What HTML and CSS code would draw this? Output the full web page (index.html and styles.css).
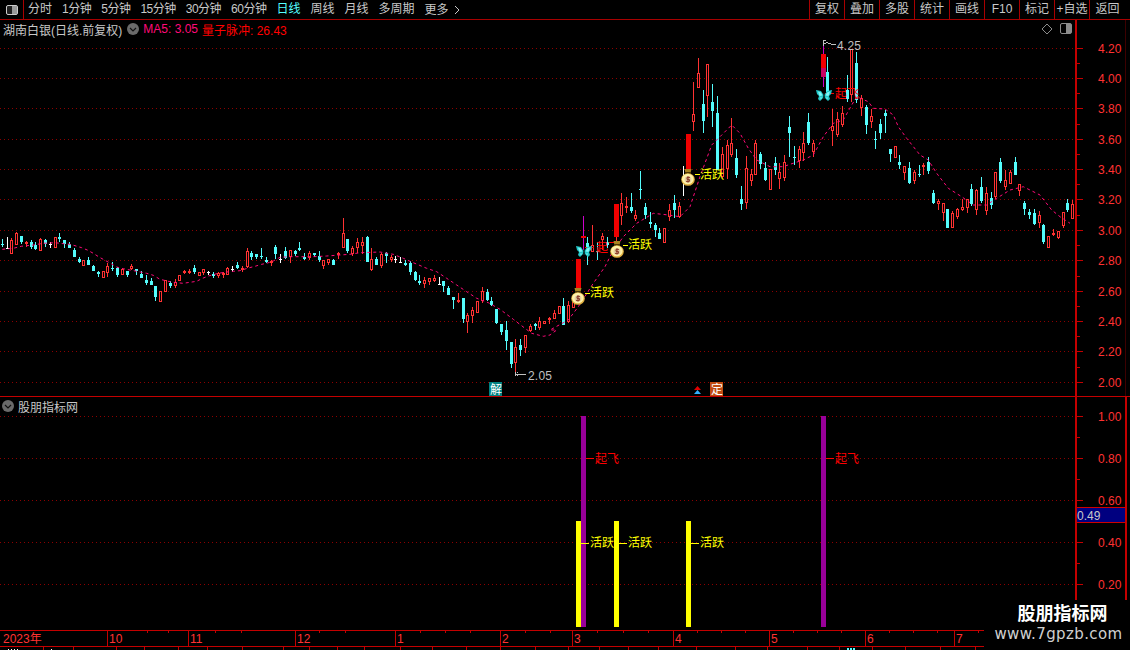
FILE: index.html
```html
<!DOCTYPE html>
<html lang="zh">
<head>
<meta charset="utf-8">
<title>股朋指标网</title>
<link rel="stylesheet" href="styles.css">
</head>
<body>
<div class="app">
  <header class="topbar">
    <div class="layout-btn"><svg class="ico" viewBox="0 0 12 10"><rect x=".5" y=".5" width="11" height="9" rx="1.5" class="ico-frame"/><rect x="6" y="1" width="5" height="8" class="ico-fill"/></svg></div>
    <nav class="periods">
      <span>分时</span><span class="num">1分钟</span><span class="num">5分钟</span><span class="num">15分钟</span><span class="num">30分钟</span><span class="num">60分钟</span><span class="active">日线</span><span>周线</span><span>月线</span><span>多周期</span><span class="more">更多<svg class="more-arrow" viewBox="0 0 6 10"><path d="M1 1l4 4-4 4"/></svg></span>
    </nav>
    <nav class="tools">
      <span>复权</span><span>叠加</span><span>多股</span><span>统计</span><span>画线</span><span>F10</span><span>标记</span><span>+自选</span><span>返回</span>
    </nav>
  </header>

  <section class="pane pane-main">
    <svg class="chart" viewBox="0 20 1130 377" width="1130" height="377">
      <defs>
        <symbol id="bag" viewBox="0 0 14 17">
          <path d="M3.500 0h7l-1 4h-5z" fill="#a88420"/>
          <rect x="4" y="3" width="6" height="2" fill="#4a3606"/>
          <ellipse cx="7" cy="10.500" rx="6.800" ry="6.300" fill="#e0b040"/>
          <ellipse cx="6.800" cy="10" rx="5.800" ry="5.300" fill="#fff2a8"/>
          <ellipse cx="7" cy="10.500" rx="3.400" ry="3.300" fill="#e4cfa0"/>
          <path d="M9 8.400H6v2h2.400v2H5M7 7.200v6.400" fill="none" stroke="#8a3a28" stroke-width="1"/>
        </symbol>
        <symbol id="fly" viewBox="0 0 16 12">
          <path d="M7.500 5L5 1 0 0l1 4 2 2-1 3 2 2 3-3z" fill="#22c8c8"/>
          <path d="M8.500 5L11 1l5-1-1 4-2 2 1 3-2 2-3-3z" fill="#22c8c8"/>
          <path d="M2 1.500l3 1 1.500 3-3 .5zM14 1.500l-3 1-1.500 3 3 .5zM4 7.500l2 0-1 2zM12 7.500l-2 0 1 2z" fill="#80f6f6"/>
          <path d="M8 3.500v5.500" stroke="#0a4a4a" stroke-width="1"/>
        </symbol>
      </defs>
      <g id="main-grid"></g>
      <g id="candles"></g>
      <path id="ma" class="ma" d=""/>
      <rect class="big-red" x="576" y="259" width="5" height="30"/>
      <rect class="big-red" x="614" y="204" width="5" height="33"/>
      <rect class="big-wick" x="616" y="237" width="1" height="4"/>
      <rect class="big-red" x="686" y="134" width="5" height="36"/>
      <rect class="white-wick" x="683" y="166" width="1" height="30"/>
      <rect class="mag-wick" x="583" y="216" width="1" height="34"/>
      <rect class="big-red" x="581" y="236" width="5" height="2"/>
      <rect class="mag-wick" x="823" y="43" width="1" height="44"/>
      <rect class="big-red" x="821" y="54" width="5" height="14"/>
      <rect class="deep-red" x="821" y="68" width="5" height="9"/>

      <path class="dash-red" d="M585 247h9M825 93h9"/>
      <text class="t-red t-cn" x="596" y="252">起飞</text>
      <text class="t-red t-cn" x="835" y="98">起飞</text>

      <use href="#bag" x="571" y="288" width="14" height="17"/>
      <use href="#bag" x="610" y="241" width="14" height="17"/>
      <use href="#bag" x="681" y="169" width="14" height="17"/>
      <use href="#fly" x="576" y="246" width="16" height="12"/>
      <use href="#fly" x="816" y="90" width="16" height="12"/>

      <path class="dash-yel" d="M585 293h5M623 245h5M695 174h5"/>
      <text class="t-yel t-cn" x="590" y="297">活跃</text>
      <text class="t-yel t-cn" x="628" y="249">活跃</text>
      <text class="t-yel t-cn" x="700" y="179">活跃</text>

      <path class="note-line" d="M515 372v4M516 374h10M517 372v1M517 375v1"/>
      <text class="t-note" x="528" y="380">2.05</text>
      <path class="note-line" d="M823 46v-6h3M824 43h2M826 42h2M828 43h3M831 44h5"/>
      <text class="t-note" x="837" y="50">4.25</text>

      <rect class="box-teal" x="489" y="382" width="13" height="14"/>
      <text class="t-box" x="490" y="394">解</text>
      <path class="tri-red" d="M697.500 386l3.500 4h-7z"/>
      <path class="tri-blue" d="M697.500 390l3.500 4h-7z"/>
      <rect class="box-orange" x="710" y="382" width="13" height="14"/>
      <text class="t-box" x="711" y="394">定</text>

      <g class="axis-labels">
        <text x="1098" y="53">4.20</text><text x="1098" y="83">4.00</text><text x="1098" y="113">3.80</text><text x="1098" y="144">3.60</text>
        <text x="1098" y="174">3.40</text><text x="1098" y="204">3.20</text><text x="1098" y="235">3.00</text><text x="1098" y="265">2.80</text>
        <text x="1098" y="296">2.60</text><text x="1098" y="326">2.40</text><text x="1098" y="356">2.20</text><text x="1098" y="387">2.00</text>
      </g>
    </svg>
    <div class="legend">
      <span class="legend-name">湖南白银(日线.前复权)</span>
      <svg class="chev" viewBox="0 0 12 12"><circle cx="6" cy="6" r="6" class="chev-bg"/><path d="M3 5l3 3 3-3" class="chev-line"/></svg>
      <span class="legend-ma">MA5: 3.05</span>
      <span class="legend-pulse">量子脉冲: 26.43</span>
      <svg class="corner" viewBox="0 0 32 12"><path d="M6 1l5 5-5 5-5-5z" class="corner-line"/><rect x="19.500" y=".5" width="11" height="10" rx="1.500" class="corner-line"/><rect x="25" y="1" width="5" height="9" class="corner-fill"/></svg>
    </div>
  </section>

  <section class="pane pane-sub">
    <svg class="chart" viewBox="0 397 1130 233" width="1130" height="233">
      <g id="sub-grid"></g>
      <rect class="bar-yel" x="576" y="521" width="5" height="106"/>
      <rect class="bar-pur" x="581" y="416" width="5" height="211"/>
      <rect class="bar-yel" x="614" y="521" width="5" height="106"/>
      <rect class="bar-yel" x="686" y="521" width="5" height="106"/>
      <rect class="bar-pur" x="821" y="416" width="5" height="211"/>
      <path class="dash-red" d="M586 458h8M826 458h8"/>
      <text class="t-red t-cn" x="595" y="463">起飞</text>
      <text class="t-red t-cn" x="835" y="463">起飞</text>
      <path class="dash-yel" d="M581 543h8M619 543h8M691 543h8"/>
      <text class="t-yel t-cn" x="590" y="547">活跃</text>
      <text class="t-yel t-cn" x="628" y="547">活跃</text>
      <text class="t-yel t-cn" x="700" y="547">活跃</text>
      <rect class="val-box" x="1077" y="507" width="48" height="16"/>
      <path class="val-edge" d="M1077 507.500h48M1077 522.500h48"/>
      <text class="t-val" x="1077" y="520">0.49</text>
      <g class="axis-labels">
        <text x="1098" y="421">1.00</text><text x="1098" y="463">0.80</text><text x="1098" y="505">0.60</text><text x="1098" y="547">0.40</text><text x="1098" y="589">0.20</text>
      </g>
    </svg>
    <div class="legend">
      <svg class="chev chev-left" viewBox="0 0 12 12"><circle cx="6" cy="6" r="6" class="chev-bg"/><path d="M3 5l3 3 3-3" class="chev-line"/></svg>
      <span class="legend-name">股朋指标网</span>
    </div>
  </section>

  <footer class="timeline">
    <svg class="chart" viewBox="0 630 1130 20" width="1130" height="20">
      <g id="time-grid"></g>
      <g class="axis-labels">
        <text x="3" y="643">2023年</text><text x="109" y="643">10</text><text x="190" y="643">11</text><text x="297" y="643">12</text><text x="397" y="643">1</text><text x="502" y="643">2</text>
        <text x="574" y="643">3</text><text x="675" y="643">4</text><text x="771" y="643">5</text><text x="867" y="643">6</text><text x="956" y="643">7</text>
      </g>
    </svg>
  </footer>

  <aside class="watermark">
    <strong class="wm-title">股朋指标网</strong>
    <span class="wm-url">www.7gpzb.com</span>
  </aside>
</div>
<script src="chart.js"></script>
</body>
</html>
```

FILE: styles.css
```css
* { box-sizing: border-box; }
html, body { margin: 0; padding: 0; background: #000; }
body {
  font-family: "Liberation Sans", "Noto Sans CJK SC", sans-serif;
  font-size: 12px;
  color: #c8c8c8;
}
.app {
  position: relative;
  width: 1130px;
  height: 650px;
  overflow: hidden;
  display: flex;
  flex-direction: column;
  background: #000;
}

/* top bar */
.topbar {
  flex: 0 0 20px;
  display: flex;
  align-items: stretch;
  border-bottom: 1px solid #a80000;
  line-height: 18px;
}
.layout-btn {
  width: 24px;
  display: flex;
  align-items: center;
  justify-content: center;
  border-right: 1px solid #a80000;
}
.ico { width: 12px; height: 10px; }
.ico-frame { fill: #222; stroke: #ccc; stroke-width: 1; }
.ico-fill { fill: #999; }
.periods {
  display: flex;
  gap: 10px;
  padding-left: 4px;
  white-space: nowrap;
}
.periods .num { letter-spacing: -.5px; }
.periods .active { color: #54ffff; }
.more { display: flex; align-items: center; gap: 5px; }
.more-arrow { width: 6px; height: 10px; }
.more-arrow path { fill: none; stroke: #c8c8c8; stroke-width: 1; }
.tools {
  margin-left: auto;
  display: flex;
  padding-right: 5px;
}
.tools span {
  width: 35px;
  text-align: center;
  border-left: 1px solid #a80000;
  white-space: nowrap;
}
.tools span:last-child { width: 36px; }

/* panes */
.pane { position: relative; }
.pane-main { flex: 0 0 377px; }
.pane-sub { flex: 0 0 233px; }
.timeline { position: relative; flex: 0 0 20px; }
.chart { position: absolute; left: 0; top: 0; display: block; }

.legend {
  position: absolute;
  left: 3px;
  right: 58px;
  top: 2px;
  display: flex;
  align-items: center;
  height: 14px;
  white-space: nowrap;
}
.pane-sub .legend { left: 2px; top: 2px; }
.legend-name { color: #c8c8c8; }
.chev { width: 12px; height: 12px; margin-left: 5px; }
.chev-left { margin-left: 0; margin-right: 4px; }
.chev-bg { fill: #6a6a6a; }
.chev-line { fill: none; stroke: #111; stroke-width: 1.2; }
.legend-ma { color: #ff0a78; margin-left: 4px; }
.legend-pulse { color: #ff0000; margin-left: 4px; }
.corner { width: 32px; height: 12px; margin-left: auto; margin-right: -1px; }
.corner-line { fill: none; stroke: #8c8c8c; stroke-width: 1; }
.corner-fill { fill: #8c8c8c; }

/* chart drawing */
.chart text { font-family: "Liberation Sans", "Noto Sans CJK SC", sans-serif; font-size: 12px; }
.chart rect, .chart line { shape-rendering: crispEdges; }
.grid { stroke: #8c0000; stroke-width: 1; stroke-dasharray: 1 3; shape-rendering: crispEdges; }
.axis-line { stroke: #c40000; stroke-width: 1; shape-rendering: crispEdges; }
.axis-wide { stroke: #c40000; stroke-width: 2; shape-rendering: crispEdges; }
.axis-dim { stroke: #3c0000; stroke-width: 1; shape-rendering: crispEdges; }
.axis-labels text { fill: #ff3232; }

.c-red { fill: #ff3232; }
.c-cyan { fill: #54fcfc; }
.c-white { fill: #ffffff; }
.c-hollow { fill: #000; stroke: #ff3232; stroke-width: 1; }
.ma { fill: none; stroke: #ff0a78; stroke-width: 1; stroke-dasharray: 3 3; }

.big-red { fill: #f00000; }
.big-wick { fill: #ff3232; }
.deep-red { fill: #c80060; }
.white-wick { fill: #fff; }
.mag-wick { fill: #cc00cc; }
.dash-red { stroke: #ff0000; fill: none; shape-rendering: crispEdges; }
.dash-yel { stroke: #ffff00; fill: none; shape-rendering: crispEdges; }
.t-red { fill: #ff0000; }
.t-yel { fill: #ffff00; }
.note-line { stroke: #c0c0c0; fill: none; shape-rendering: crispEdges; }
.t-note { fill: #c0c0c0; letter-spacing: .2px; }
.box-teal { fill: #008080; }
.box-orange { fill: #c04a10; }
.t-box { fill: #fff; }
.tri-red { fill: #e00000; }
.tri-blue { fill: #30b0ff; }
.bar-yel { fill: #ffff00; }
.bar-pur { fill: #990099; }
.val-box { fill: #000080; }
.val-edge { stroke: #d00000; fill: none; shape-rendering: crispEdges; }
.t-val { fill: #c8c8c8; }

/* watermark */
.watermark {
  position: absolute;
  right: 0;
  bottom: 0;
  width: 146px;
  height: 50px;
  background: #000;
  display: flex;
  flex-direction: column;
  align-items: center;
  padding-top: 1px;
}
.wm-title {
  font-family: "Noto Sans CJK SC", sans-serif;
  font-size: 18px;
  line-height: 22px;
  color: #fff;
  font-weight: 700;
  padding-left: 11px;
}
.wm-url {
  font-family: "DejaVu Sans", sans-serif;
  font-size: 15px;
  line-height: 18px;
  color: #d0d0d0;
  letter-spacing: .4px;
  margin-left: 3px;
  margin-top: 2px;
}
```

FILE: chart.js
```js
// [x, type, high, low, bodyTop, bodyBottom] in 3x sample units; type: r hollow red, c filled cyan, w white doji
var groups = [
  { ox: 0, oy: 200, rows: [
    [7,'c',118,140,131,134],[21,'w',111,147,144,146],[34,'r',115,162,121,162],[49,'r',96,136,99,134],[64,'c',108,132,108,126],
    [79,'r',123,141,126,133],[94,'c',121,148,126,142],[106,'c',127,150,135,146],[121,'r',115,153,117,152],[136,'c',117,141,120,133],
    [151,'w',126,144,133,135],[166,'r',111,143,112,143],[178,'c',99,127,112,118],[193,'c',120,144,120,132],[208,'c',126,144,133,144],
    [223,'c',144,171,150,171],[238,'c',171,189,177,186],[250,'r',180,197,180,197],[265,'c',171,195,180,195],[280,'c',195,213,198,213],
    [295,'c',213,232,216,222],[310,'r',213,234,214,233],[322,'r',189,232,198,219],[337,'c',186,213,204,207],[352,'c',201,231,204,225],
    [367,'r',204,225,207,224],[382,'c',213,231,213,225],[394,'r',192,210,198,207],[409,'c',207,225,207,213],[424,'c',213,234,222,234],
    [439,'c',225,256,240,250],[454,'c',234,255,243,255],[466,'c',258,303,258,291],[481,'r',273,306,274,305],[496,'r',240,276,241,275],
    [511,'c',243,264,249,258],[526,'r',237,264,246,258],[538,'r',225,243,226,242],[553,'r',210,222,213,219],[568,'r',207,222,213,219],
    [583,'c',195,222,204,216],[598,'r',216,228,217,228],[610,'r',207,225,208,219],[625,'w',213,226,217,219],[640,'c',216,234,222,228],
    [655,'r',216,234,219,228],[670,'r',216,234,219,222],[682,'r',201,225,204,224],[697,'w',198,216,208,210],[712,'c',186,207,195,204],
    [727,'r',198,216,204,210],[742,'r',144,204,153,201],[754,'c',153,180,159,171],[769,'c',162,177,163,171],[784,'c',144,177,168,171],
    [799,'c',171,189,180,186],[814,'r',180,198,183,189],[826,'c',135,177,141,162]
  ]},
  { ox: 280, oy: 220, rows: [
    [0,'w',103,128,117,119],[16,'c',82,118,93,114],[31,'r',90,128,91,112],[46,'c',90,108,94,103],[58,'c',66,93,84,90],
    [73,'c',100,120,111,117],[88,'r',94,120,100,114],[103,'c',99,111,100,104],[118,'c',93,125,108,120],[130,'r',120,147,121,137],
    [145,'r',117,135,118,130],[160,'c',117,135,120,135],[175,'r',96,117,99,105],[190,'r',-6,85,39,84],[202,'c',57,99,57,93],
    [217,'r',78,108,84,102],[232,'r',54,99,66,84],[247,'r',51,102,66,78],[262,'c',48,126,51,126],[274,'r',84,153,117,150],
    [289,'c',111,135,117,135],[304,'r',99,144,102,138],[319,'c',96,129,99,108],[334,'r',105,126,111,120],[346,'w',108,129,117,119],
    [361,'w',111,129,126,128],[376,'c',120,138,129,135],[391,'c',123,165,129,156],[406,'c',153,183,156,180],[418,'c',165,195,183,189],
    [433,'r',171,204,180,192],[448,'r',174,195,175,187],[463,'r',165,186,174,183],[478,'w',171,195,192,194],[490,'c',183,216,183,198],
    [505,'c',198,225,204,225],[520,'c',231,267,231,240],[535,'r',219,249,240,246],[550,'c',234,309,234,297],[562,'r',279,339,285,306],
    [577,'r',261,309,270,288],[592,'r',243,279,244,278],[607,'r',201,249,213,243],[622,'c',207,243,216,240],[634,'c',231,258,243,255],
    [649,'c',267,312,267,309],[664,'c',312,345,312,336],[679,'c',303,390,330,363],[694,'c',366,444,366,432],[706,'r',357,468,381,429],
    [721,'c',357,408,375,390],[736,'r',345,399,346,384],[751,'r',312,336,318,333],[766,'c',309,330,312,318],[778,'r',291,330,303,324],
    [793,'r',303,312,303,312],[808,'r',291,312,294,300],[823,'r',270,297,279,297],[838,'r',258,282,259,282]
  ]},
  { ox: 540, oy: 50, rows: [
    [70,'c',744,825,768,825],[85,'r',753,820,765,815],[100,'r',750,775,757,773],
    [142,'c',560,645,580,596],[157,'r',525,605,585,605],[172,'c',575,630,604,607],[187,'r',550,600,558,570],[202,'c',560,595,575,585],
    [244,'r',430,525,460,497],[259,'r',442,490,468,473],[274,'c',430,490,472,482],[286,'r',480,512,496,506],[301,'c',363,447,417,419],
    [316,'c',460,508,472,496],[331,'c',487,535,516,522],[346,'c',520,562,526,540],[358,'c',535,568,550,568],[373,'r',534,578,535,578],
    [388,'r',462,512,481,500],[403,'c',435,505,460,480],[418,'r',457,505,468,500],[460,'r',97,243,193,215],[475,'r',25,115,70,114],
    [490,'c',120,248,162,213],[502,'r',42,200,43,137],[517,'c',102,230,156,183],[532,'c',138,360,189,360],[547,'r',292,385,313,382],
    [562,'r',270,388,285,358],[574,'r',205,320,280,315],[589,'c',297,384,324,374],[604,'c',408,480,447,461],[619,'r',318,477,355,460],
    [634,'r',357,408,373,392],[646,'r',270,376,280,374],[661,'c',306,357,312,342],[676,'c',336,392,354,390],[691,'r',357,420,358,419],
    [706,'c',321,375,340,360],[718,'r',339,417,366,386],[733,'r',315,393,336,384],[748,'c',198,320,232,250]
  ]},
  { ox: 790, oy: 40, rows: [
    [13,'c',318,375,351,353],[28,'r',318,384,327,362],[40,'r',276,362,309,339],[55,'c',220,315,246,309],[70,'r',300,352,309,336],
    [112,'c',50,155,96,155],[127,'r',207,317,258,272],[142,'r',217,290,238,285],[157,'r',198,260,220,254],[172,'c',105,185,150,178],
    [184,'r',28,185,28,165],[199,'c',37,190,70,180],[214,'r',165,228,175,205],[229,'c',195,282,202,254],[244,'r',208,265,229,245],
    [256,'c',274,327,297,299],[271,'c',237,297,252,278],[286,'c',210,278,219,228],[301,'c',327,365,327,342],[316,'r',318,354,319,353],
    [328,'c',345,387,366,375],[343,'r',378,420,379,399],[358,'c',366,432,384,429],[373,'r',390,432,396,423],[388,'c',375,411,403,406],
    [400,'r',369,405,375,381],[415,'c',351,402,366,393],[430,'c',450,492,459,489],[445,'r',477,510,483,492],[460,'r',489,543,490,519],
    [472,'c',507,564,507,564],[487,'r',514,564,518,563],[502,'r',505,537,507,531],[517,'r',477,514,501,510],[532,'r',477,519,478,504],
    [544,'c',432,498,447,492],[559,'r',447,526,450,510],[574,'c',411,489,441,483],[589,'r',441,525,459,513],[604,'c',456,507,474,495],
    [616,'r',396,478,397,472],[631,'c',354,429,366,423],[646,'r',390,450,420,440],[661,'r',390,432,396,431],[676,'c',351,405,366,405],
    [688,'r',432,468,433,453],[703,'c',483,525,489,507],[718,'c',507,537,516,525],[733,'c',507,555,519,552],[748,'r',513,564,525,549],
    [760,'c',552,612,555,606],[775,'r',588,624,589,623],[790,'r',567,588,579,585],[805,'r',573,597,574,594],[820,'r',516,564,517,557],
    [832,'c',477,516,489,510],[847,'r',480,537,492,537]
  ]}
];

var maSamples = [
  { ox: 0, oy: 200, pts: [[7,148],[40,145],[64,139],[100,135],[130,130],[165,128],[190,131],[210,133],[225,137],[245,143],[262,150],[280,160],[297,171],[315,181],[335,192],[350,201],[370,206],[395,211],[425,217],[440,220],[460,226],[480,238],[510,245],[530,248],[550,250],[570,247],[590,244],[605,236],[625,228],[640,224],[655,220],[680,216],[700,214],[720,212],[745,204],[765,199],[785,193],[800,190],[820,183]] },
  { ox: 280, oy: 220, pts: [[0,112],[30,110],[60,110],[100,110],[140,108],[180,105],[210,103],[240,98],[300,96],[340,103],[370,115],[400,128],[440,145],[470,155],[500,175],[530,195],[560,215],[590,235],[625,248],[660,268],[700,298],[735,325],[755,340],[790,349],[810,345],[830,330]] },
  { ox: 540, oy: 50, pts: [[30,840],[85,810],[115,770],[160,700],[195,650],[215,610],[250,560],[290,520],[340,490],[385,495],[420,500],[450,470],[480,380],[515,285],[540,260],[575,225],[600,250],[625,295],[650,330],[690,350],[730,350]] },
  { ox: 790, oy: 40, pts: [[0,373],[40,360],[70,345],[100,290],[130,250],[160,240],[185,195],[200,170],[235,185],[250,205],[285,207],[310,225],[325,260],[350,295],[390,345],[415,360],[440,400],[475,445],[515,470],[550,495],[590,495],[620,475],[660,450],[700,440],[750,465],[785,510],[810,530],[840,550]] }
];

var NS = 'http://www.w3.org/2000/svg';
function el(parent, name, attrs) {
  var n = document.createElementNS(NS, name);
  for (var k in attrs) n.setAttribute(k, attrs[k]);
  parent.appendChild(n);
  return n;
}
function rect(p, x, y, w, h, cls) { return el(p, 'rect', { x: x, y: y, width: w, height: h, 'class': cls }); }
function line(p, x1, y1, x2, y2, cls) { return el(p, 'line', { x1: x1, y1: y1, x2: x2, y2: y2, 'class': cls }); }

// candles
var layer = document.getElementById('candles');
groups.forEach(function (g) {
  g.rows.forEach(function (r) {
    var c = Math.round(r[0] / 3 + g.ox), Y = function (v) { return Math.round(g.oy + v / 3); };
    var hi = Y(r[2]), lo = Y(r[3]), top = Y(r[4]), bot = Y(r[5]);
    if (bot <= top) bot = top + 1;
    if (r[1] === 'w') {
      rect(layer, c, hi, 1, Math.max(lo - hi, 1), 'c-white');
      rect(layer, c - 1, top, 3, 1, 'c-white');
    } else if (r[1] === 'c') {
      rect(layer, c, hi, 1, Math.max(lo - hi, 1), 'c-cyan');
      rect(layer, c - 1, top, 3, bot - top, 'c-cyan');
    } else {
      rect(layer, c, hi, 1, Math.max(lo - hi, 1), 'c-red');
      rect(layer, c - 1 + .5, top + .5, 2, Math.max(bot - top - 1, 1), 'c-hollow');
    }
  });
});

// moving average
var d = [];
maSamples.forEach(function (s) {
  s.pts.forEach(function (p) {
    d.push((d.length ? 'L' : 'M') + (s.ox + p[0] / 3).toFixed(1) + ' ' + (s.oy + p[1] / 3).toFixed(1));
  });
});
document.getElementById('ma').setAttribute('d', d.join(''));

// price pane grid and axis
var mainY = [48, 78, 108, 139, 169, 199, 230, 260, 291, 321, 351, 382];
var mg = document.getElementById('main-grid');
mainY.forEach(function (y, i) {
  line(mg, 0, y + .5, 1075, y + .5, 'grid');
  line(mg, 1077, y + .5, 1083, y + .5, 'axis-line');
  if (i < mainY.length - 1) {
    var m = Math.round((y + mainY[i + 1]) / 2);
    line(mg, 1077, m + .5, 1080, m + .5, 'axis-line');
  }
});
line(mg, 1076, 20, 1076, 397, 'axis-wide');
line(mg, 1125.5, 20, 1125.5, 397, 'axis-dim');
line(mg, 0, 396.5, 1130, 396.5, 'axis-line');

// indicator pane grid and axis
var subY = [416, 458, 500, 542, 584];
var sg = document.getElementById('sub-grid');
subY.forEach(function (y) {
  line(sg, 0, y + .5, 1075, y + .5, 'grid');
  line(sg, 1077, y + .5, 1083, y + .5, 'axis-line');
  line(sg, 1077, y + 21.5, 1080, y + 21.5, 'axis-line');
});
line(sg, 1076, 397, 1076, 630, 'axis-wide');
line(sg, 1126, 397, 1126, 630, 'axis-wide');

// time axis
var tg = document.getElementById('time-grid');
line(tg, 0, 630.5, 1130, 630.5, 'axis-line');
line(tg, 0, 646.5, 1130, 646.5, 'axis-line');
[107, 188, 295, 395, 500, 572, 673, 769, 865, 954].forEach(function (x) {
  line(tg, x + .5, 630, x + .5, 647, 'axis-line');
});
[147, 168, 215, 241, 319, 345, 420, 445, 470, 525, 550, 597, 623, 648, 697, 721, 745, 793, 817, 841, 889, 913, 937, 978].forEach(function (x) {
  line(tg, x + .5, 631, x + .5, 633, 'axis-line');
});
[43, 73, 116, 144, 178, 207, 242, 283, 309, 337, 364, 400, 432, 466, 500, 535, 568, 599, 628, 658, 696, 735, 767, 807, 839, 872, 905, 940, 975].forEach(function (x) {
  line(tg, x + .5, 647, x + .5, 650, 'axis-line');
});
[8, 11, 14, 17, 51].forEach(function (x) { rect(tg, x, 649, 1, 1, 'c-white'); });
[847, 850, 853].forEach(function (x) { rect(tg, x, 648, 2, 2, 'c-cyan'); });
```
